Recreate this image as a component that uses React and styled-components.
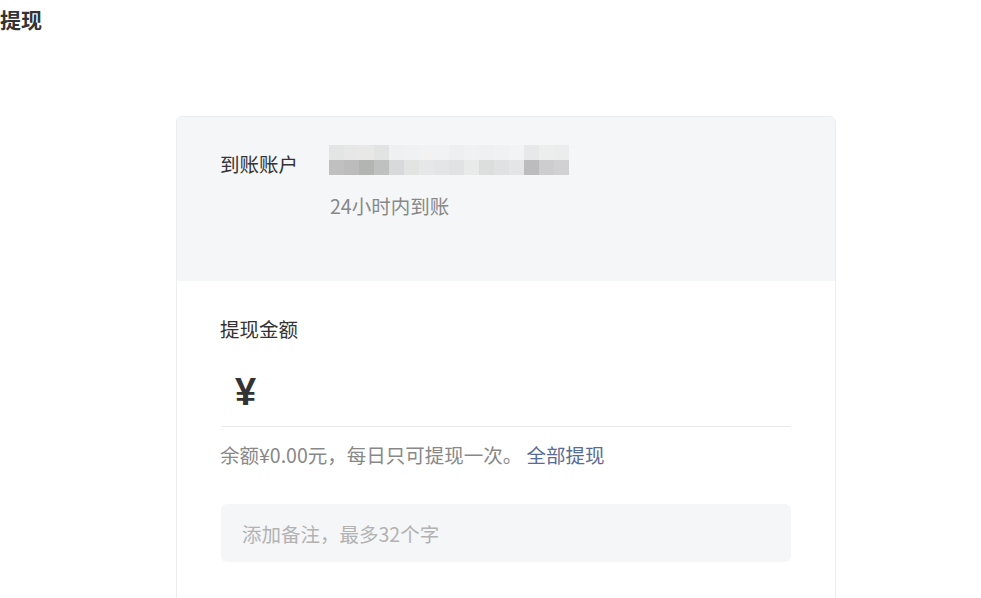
import React, { useState } from "react";
import styled, { createGlobalStyle } from "styled-components";

const GlobalStyle = createGlobalStyle`
  html, body {
    margin: 0;
    padding: 0;
    background: #ffffff;
    font-family: "Noto Sans CJK SC", "Noto Sans", sans-serif;
    color: #333333;
  }
`;

// mosaic colours of the masked account number (top row, bottom row)
const mosaicTop = [
  "#e3e4e4", "#e7e7e7", "#e8e8e7", "#e2e3e3", "#eff0f1", "#f0f1f2", "#f2f2f3", "#f1f2f3",
  "#eeeff1", "#f0f1f2", "#eff0f1", "#f0f1f2", "#f2f3f4", "#e7e8e9", "#eceded", "#ebecec",
];
const mosaicBottom = [
  "#c0c0c0", "#bcbcbc", "#b3b5b3", "#bfc1c0", "#d8d9da", "#e2e4e3", "#e6e7e8", "#e4e5e6",
  "#e1e2e3", "#e8eaea", "#dcdddd", "#e0e1e2", "#e4e5e6", "#bcbcbe", "#cdcdcf", "#d1d1d3",
];

const App = () => {
  const [remark, setRemark] = useState("");

  return (
    <>
      <GlobalStyle />
      <Page>
        <Title>提现</Title>

        <Card>
          {/* account section */}
          <AccountSection>
            <Row>
              <Label>到账账户</Label>
              <AccountInfo>
                <Mosaic width="240" height="30" viewBox="0 0 240 30">
                  {mosaicTop.map((c, i) => (
                    <rect key={"t" + i} x={i * 15} y="0" width="15" height="15" fill={c} />
                  ))}
                  {mosaicBottom.map((c, i) => (
                    <rect key={"b" + i} x={i * 15} y="15" width="15" height="15" fill={c} />
                  ))}
                </Mosaic>
                <Hint>24小时内到账</Hint>
              </AccountInfo>
            </Row>
          </AccountSection>

          {/* amount section */}
          <AmountSection>
            <Label>提现金额</Label>
            <AmountRow>
              <Yen>¥</Yen>
              <AmountInput type="text" />
            </AmountRow>
            <Balance>
              余额¥0.00元，每日只可提现一次。 <Link>全部提现</Link>
            </Balance>
            <Remark
              type="text"
              value={remark}
              placeholder="添加备注，最多32个字"
              onChange={(e) => setRemark(e.target.value)}
            />
          </AmountSection>
        </Card>
      </Page>
    </>
  );
};

export default App;

const Page = styled.div`
  width: 981px;
  height: 598px;
  overflow: hidden;
`;

const Title = styled.h1`
  margin: 0;
  padding: 5px 0 0 0;
  font-size: 21px;
  line-height: 28px;
  font-weight: 700;
  color: #333333;
`;

const Card = styled.div`
  margin: 83px 0 0 176px;
  width: 658px;
  border: 1px solid #ebedf0;
  border-radius: 6px;
  overflow: hidden;
`;

const AccountSection = styled.div`
  background: #f5f6f8;
  padding: 28px 44px 65px;
`;

const Row = styled.div`
  display: flex;
  align-items: flex-start;
`;

const Label = styled.div`
  width: 108px;
  flex-shrink: 0;
  font-size: 19.5px;
  line-height: 20px;
  color: #333333;
  margin-top: 9px;
  margin-left: -1px;
`;

const AccountInfo = styled.div`
  display: flex;
  flex-direction: column;
  margin-left: 1px;
`;

const Mosaic = styled.svg`
  display: block;
`;

const Hint = styled.div`
  margin-top: 21px;
  margin-left: 1px;
  font-size: 19.5px;
  line-height: 20px;
  color: #888888;
`;

const AmountSection = styled.div`
  background: #ffffff;
  padding: 29px 44px 40px;
`;

const AmountRow = styled.div`
  display: flex;
  align-items: center;
  height: 87px;
  border-bottom: 1px solid #ebebeb;
`;

const Yen = styled.span`
  font-family: "Liberation Sans", "Noto Sans", sans-serif;
  font-size: 38px;
  font-weight: 700;
  color: #333333;
  margin-left: 14px;
  margin-top: 20px;
`;

const AmountInput = styled.input`
  flex: 1;
  border: none;
  outline: none;
  background: transparent;
  font-size: 34px;
  margin-left: 10px;
`;

const Balance = styled.div`
  margin-top: 18px;
  margin-left: -1px;
  font-size: 19.5px;
  line-height: 20px;
  color: #888888;
`;

const Link = styled.a`
  color: #576b95;
  cursor: pointer;
`;

const Remark = styled.input`
  display: block;
  box-sizing: border-box;
  width: 100%;
  height: 58px;
  margin-top: 39px;
  padding: 0 21px;
  border: none;
  outline: none;
  border-radius: 6px;
  background: #f5f6f8;
  font-family: "Noto Sans CJK SC", "Noto Sans", sans-serif;
  font-size: 19.5px;
  color: #333333;

  &::placeholder {
    color: #b2b2b2;
  }
`;
